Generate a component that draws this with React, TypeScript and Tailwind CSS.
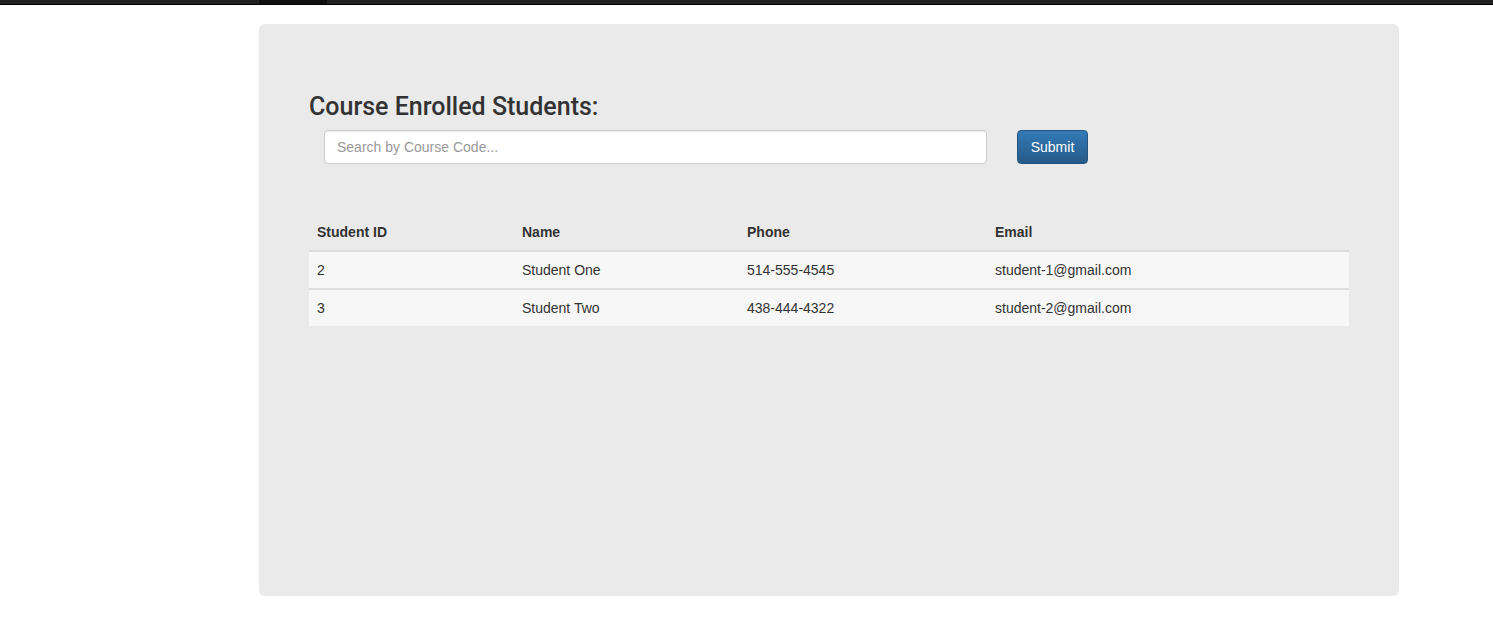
import React from "react";

const rows = [
  { id: "2", name: "Student One", phone: "514-555-4545", email: "student-1@gmail.com" },
  { id: "3", name: "Student Two", phone: "438-444-4322", email: "student-2@gmail.com" },
];

export default function App() {
  return (
    <div className="min-h-[625px] bg-white text-[#333] [font-family:'Liberation_Sans',Arial,sans-serif]">
      <div className="flex h-[5px] border-b border-black bg-[#222]">
        <div className="ml-[259px] h-full w-[68px] bg-[#0f0f0f]" />
      </div>
      <div className="ml-[259px] mt-[19px] h-[572px] w-[1140px] rounded-[6px] bg-[#eaeaea] px-[50px] pt-[70px]">
        <h2 className="h-[26px] text-[25px] font-medium leading-[26px] text-[#333] [font-family:Roboto,'Liberation_Sans',Arial,sans-serif]">Course Enrolled Students:</h2>
        <div className="mt-[10px] flex items-center pl-[15px]">
          <input
            type="text"
            placeholder="Search by Course Code..."
            className="h-[34px] w-[663px] rounded-[4px] border border-[#ccc] bg-white px-[12px] text-[14px] text-[#555] shadow-[inset_0_1px_1px_rgba(0,0,0,0.075)] outline-none placeholder:text-[#999]"
          />
          <button className="ml-[30px] h-[34px] w-[71px] rounded-[4px] border border-[#245580] bg-gradient-to-b from-[#337ab7] to-[#265a88] text-[14px] text-white">
            Submit
          </button>
        </div>
        <table className="mt-[50px] w-[1040px] border-collapse text-[14px] leading-[20px]">
          <thead>
            <tr className="border-b-2 border-[#ddd] text-left">
              <th className="w-[205px] px-[8px] py-[8px] font-bold">Student ID</th>
              <th className="w-[225px] px-[8px] py-[8px] font-bold">Name</th>
              <th className="w-[248px] px-[8px] py-[8px] font-bold">Phone</th>
              <th className="px-[8px] py-[8px] font-bold">Email</th>
            </tr>
          </thead>
          <tbody>
            {rows.map((r, i) => (
              <tr key={r.id} className={i === 0 ? "bg-[#f7f7f7]" : "border-t-2 border-[#ddd] bg-[#f7f7f7]"}>
                <td className="px-[8px] py-[8px]">{r.id}</td>
                <td className="px-[8px] py-[8px]">{r.name}</td>
                <td className="px-[8px] py-[8px]">{r.phone}</td>
                <td className="px-[8px] py-[8px]">{r.email}</td>
              </tr>
            ))}
          </tbody>
        </table>
      </div>
    </div>
  );
}
